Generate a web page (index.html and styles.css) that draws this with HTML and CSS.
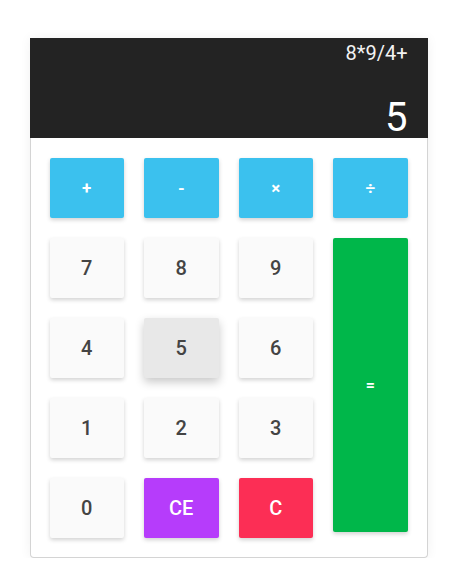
FILE: index.html
```html
<!DOCTYPE html>
<html>
<head>
<meta charset="utf-8">
<link rel="stylesheet" href="styles.css">
</head>
<body>
<div class="calc">
  <div class="display">
    <div class="expr">8*9/4+</div>
    <div class="result">5</div>
  </div>
  <div class="keys">
    <div class="key op">+</div>
    <div class="key op">-</div>
    <div class="key op">×</div>
    <div class="key op">÷</div>
    <div class="key num">7</div>
    <div class="key num">8</div>
    <div class="key num">9</div>
    <div class="key eq">=</div>
    <div class="key num">4</div>
    <div class="key num active">5</div>
    <div class="key num">6</div>
    <div class="key num">1</div>
    <div class="key num">2</div>
    <div class="key num">3</div>
    <div class="key num">0</div>
    <div class="key ce">CE</div>
    <div class="key clr">C</div>
  </div>
</div>
</body>
</html>
```
FILE: styles.css
```css
html, body {
  margin: 0;
  padding: 0;
  background: #ffffff;
  font-family: Roboto, "Liberation Sans", sans-serif;
}
body {
  padding-top: 38px;
}
.calc {
  width: 396px;
  margin: 0 auto;
  border: 1px solid #d4d4d4;
  border-top: none;
  border-radius: 0 0 4px 4px;
  box-shadow: 0 0 12px rgba(0, 0, 0, 0.06);
  background: #fff;
}
.display {
  margin: 0 -1px;
  height: 100px;
  background: #232323;
  color: #f2f2f2;
  display: flex;
  flex-direction: column;
  justify-content: space-between;
  align-items: flex-end;
  padding: 2px 20px 0 20px;
  box-sizing: border-box;
}
.expr {
  font-size: 20px;
  line-height: 26px;
}
.result {
  font-size: 40px;
  line-height: 40px;
  color: #ffffff;
}
.keys {
  display: grid;
  grid-template-columns: repeat(4, 1fr);
  grid-auto-rows: 60px;
  gap: 20px;
  padding: 20px 19px 19px 19px;
}
.key {
  display: flex;
  align-items: center;
  justify-content: center;
  border-radius: 2px;
  font-size: 20px;
  box-shadow: 0 2px 4px rgba(0, 0, 0, 0.18);
}
.op {
  background: #3bc1ee;
  color: #fff;
  font-weight: 700;
  font-size: 17px;
}
.num {
  background: #fafafa;
  color: #444;
  font-weight: 500;
}
.num.active {
  background: #e8e8e8;
  box-shadow: 0 4px 10px rgba(0, 0, 0, 0.22);
}
.eq {
  grid-column: 4;
  grid-row: 2 / span 4;
  align-self: start;
  height: 294px;
  background: #00b74a;
  color: #fff;
  font-weight: 700;
  font-size: 16px;
}
.ce {
  background: #b63cfb;
  color: #fff;
  font-weight: 500;
}
.clr {
  background: #fc2e55;
  color: #fff;
  font-weight: 500;
}
```
